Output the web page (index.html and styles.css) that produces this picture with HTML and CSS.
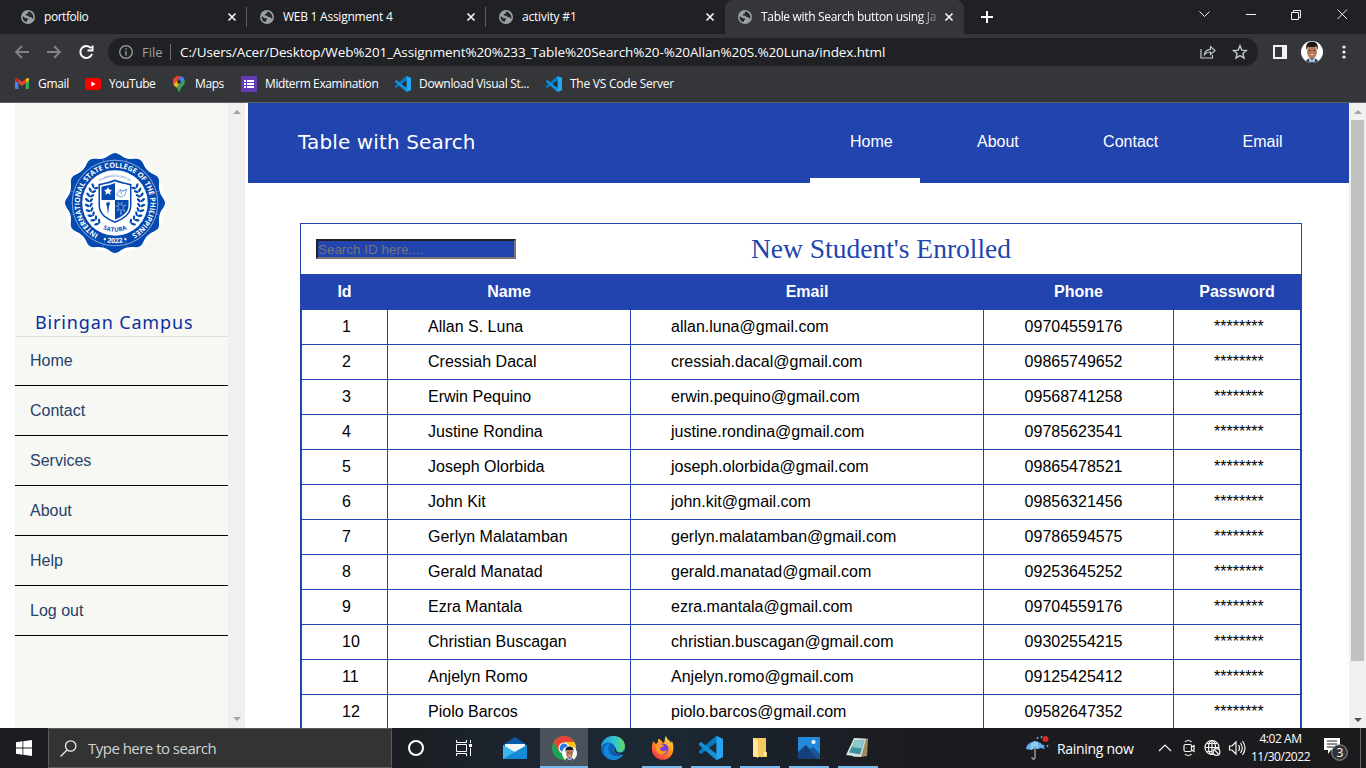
FILE: index.html
```html
<!DOCTYPE html>
<html lang="en">
<head>
<meta charset="utf-8">
<title>Table with Search button using JavaScript</title>
<link rel="stylesheet" href="styles.css">
</head>
<body>
<svg class="defs" width="0" height="0">
  <defs>
    <symbol id="globe" viewBox="0 0 14 14"><circle cx="7" cy="7" r="7" fill="#9aa0a6"/><path d="M1.700 6 4.500 8.200h2.300l.4 1.400-1.200.7v1.500C2.900 11.800 1.300 9.500 1.700 6ZM7 1.600l-.3 1.900-2 .8.3 1.300 2.200.2 1.400 1.500 2-.1.8 1.400h1c.5-3.400-1.600-6.500-5.400-7Z" fill="#27282c"/></symbol>
    <symbol id="close" viewBox="0 0 10 10"><path d="m1.500 1.500 7 7m0-7-7 7" stroke="#f1f3f4" stroke-width="1.700"/></symbol>
    <symbol id="code" viewBox="0 0 24 24"><path d="m17.500 0 6.500 3v18l-6.500 3L6.800 14.400 2.100 18 0 16.800V15l14-12.500L17.500 0Z" fill="#0879bf"/><path d="M0 7.200 2.100 6l15.400 11.800V24L0 9Z" fill="#1291d8"/><path d="M17.500 6.300 10 12l7.500 5.700Z" fill="#25292e"/><path d="m17.500 0 6.500 3v18l-6.500 3Z" fill="#24a5f2"/></symbol>
    <symbol id="face" viewBox="0 0 22 22"><circle cx="11" cy="11" r="11" fill="#fff"/><path d="M5 20c1-2 3-3 6-3s5 1 6 3c-3 2.600-9 2.600-12 0Z" fill="#27364e"/><path d="m8 16 3 3 3-3v5H8Z" fill="#9fc4e8"/><ellipse cx="11" cy="10.800" rx="5" ry="6.800" fill="#b87858"/><path d="M5.500 9C4 2 8 .8 11 .8S18 2 16.500 9l-1.300-3.500c-3 .8-5.500.5-8.300.2Z" fill="#17171a"/><path d="M7.800 9.500h2m2.400 0h2" stroke="#5a3526"/><path d="M9 13.300h4c-.8 1.300-3.200 1.300-4 0Z" fill="#f4e6df"/></symbol>
    <path id="petal" d="M0 0-12-44.600C-7-45.500-4-50 0-50S7-45.500 12-44.600Z"/>
    <g id="leaf"><ellipse cx="-28" cy="-1" rx="2.600" ry="1.200" transform="rotate(35 -28 -1)"/><ellipse cx="-24" cy="-1" rx="2.500" ry="1.150" transform="rotate(-48 -24 -1)"/></g>
    <g id="laurel"><use href="#leaf" transform="rotate(-51)"/><use href="#leaf" transform="rotate(-40)"/><use href="#leaf" transform="rotate(-29)"/><use href="#leaf" transform="rotate(-18)"/><use href="#leaf" transform="rotate(-7)"/><use href="#leaf" transform="rotate(4)"/><use href="#leaf" transform="rotate(15)"/><use href="#leaf" transform="rotate(26)"/><use href="#leaf" transform="rotate(36)"/></g>
  </defs>
</svg>
<div class="screen">
  <div class="tabs">
    <div class="tab"><svg class="globe"><use href="#globe"/></svg><span class="tab-name t1">portfolio</span><svg class="close"><use href="#close"/></svg></div>
    <div class="tab"><svg class="globe"><use href="#globe"/></svg><span class="tab-name t2">WEB 1 Assignment 4</span><svg class="close"><use href="#close"/></svg></div>
    <div class="tab last"><svg class="globe"><use href="#globe"/></svg><span class="tab-name t3">activity #1</span><svg class="close"><use href="#close"/></svg></div>
    <div class="tab active"><svg class="globe"><use href="#globe"/></svg><span class="tab-name t4">Table with Search button using Ja</span><svg class="close"><use href="#close"/></svg></div>
    <svg class="plus" viewBox="0 0 12 12"><path d="M6 0v12M0 6h12" stroke="#fff" stroke-width="2"/></svg>
    <svg class="window-buttons" viewBox="0 0 150 20" fill="none" stroke="#f2f2f2"><path d="m.5 7.500 5 5 5-5"/><path d="M47 10.500h10"/><path d="M92.500 8.500h7v7h-7zM94.500 8V6.500h7v7H100"/><path d="m138.500 5.500 9.500 9.500m0-9.500-9.500 9.500"/></svg>
  </div>
  <div class="toolbar">
    <svg class="nav" viewBox="0 0 84 16" fill="none" stroke-width="1.800"><path d="M15 8H2m6-6L2 8l6 6M33 8h13m-6-6 6 6-6 6" stroke="#828387"/><path d="M77 4.200A6 6 0 1 0 78 10M78.500 1.500v5h-5" stroke="#fff" stroke-width="2"/></svg>
    <div class="omnibox">
      <svg class="info" viewBox="0 0 14 14"><circle cx="7" cy="7" r="6.300" fill="none" stroke="#9aa0a6" stroke-width="1.300"/><path d="M7 6v4.500M7 3.300v1.400" stroke="#9aa0a6" stroke-width="1.400"/></svg>
      <span class="scheme">File</span><span class="bar"></span>
      <span class="url">C:/Users/Acer/Desktop/Web%201_Assignment%20%233_Table%20Search%20-%20Allan%20S.%20Luna/index.html</span>
      <svg class="share" viewBox="0 0 48 16" fill="none" stroke="#c4c7c9" stroke-width="1.200"><path d="M1 5v9h11.500v-3M4.500 10.500C5 7 7 5.500 10.500 5.300V2.500L15 6.500l-4.500 4V8C8 8 6 8.800 4.500 10.500Z"/><path d="m40 1.800 1.800 4.300 4.600.4-3.500 3 1.100 4.500-4-2.400-4 2.400 1.100-4.500-3.500-3 4.600-.4Z" stroke-width="1.400"/></svg>
    </div>
    <svg class="panel" viewBox="0 0 14 14"><path d="M0 0h14v14H0z" fill="#f1f3f4"/><path d="M2 2h7v10H2z" fill="#35363a"/></svg>
    <svg class="avatar"><use href="#face"/></svg>
    <svg class="dots" viewBox="0 0 4 14" fill="#f1f3f4"><circle cx="2" cy="2" r="1.600"/><circle cx="2" cy="7" r="1.600"/><circle cx="2" cy="12" r="1.600"/></svg>
  </div>
  <div class="bookmarks">
    <div class="bm gmail"><svg viewBox="0 0 14 11" width="14" height="11"><path d="M0 1.500V10a1 1 0 0 0 1 1h2.300V5Z" fill="#4285f4"/><path d="M14 1.500V10a1 1 0 0 1-1 1h-2.300V5Z" fill="#34a853"/><path d="M10.700 1.200V5L14 2.500V1.300C14-.1 12.500-.3 11.600.5Z" fill="#fbbc04"/><path d="M3.300 5V1L7 3.700 10.700 1v4L7 7.800Z" fill="#ea4335"/><path d="M0 1.300v1.200L3.300 5V1.200L2.400.5C1.500-.3 0-.1 0 1.300Z" fill="#c5221f"/></svg><span>Gmail</span></div>
    <div class="bm youtube"><svg viewBox="0 0 16 12" width="16" height="12"><rect width="16" height="12" rx="2.500" fill="red"/><path d="m6.300 3.500 4.300 2.500-4.300 2.500Z" fill="#fff"/></svg><span>YouTube</span></div>
    <div class="bm maps"><svg viewBox="0 0 12 16" width="12" height="16"><path d="M0 6a6 6 0 0 1 1.500-4L6 6 2 10.600C1 9 0 8 0 6Z" fill="#fbbc04"/><path d="M1.400 2A6 6 0 0 1 8 .3L4 5Z" fill="#ea4335"/><path d="M8 .3c2 .6 3 1.800 3.500 3.200L4 12c-1-.8-1.500-1.300-2.200-2.400Z" fill="#4285f4"/><path d="M11.500 3.500C13.200 9 7.800 9.500 6.800 15.300c-.2.900-1.400.9-1.600 0C5 14 4.500 12.500 3.800 11.800Z" fill="#34a853"/><path d="M0 6c0-2 .5-3 1.400-4L4 4 1 9C.3 8 0 7 0 6Z" fill="#ea4335"/><path d="m1 9 3-4 2 3-2.500 3.600Z" fill="#fbbc04"/><circle cx="6" cy="5.800" r="2.100" fill="#35363a"/></svg><span>Maps</span></div>
    <div class="bm forms"><svg viewBox="0 0 16 16" width="16" height="16"><rect width="16" height="16" rx="1" fill="#673ab7"/><path d="M3 4h2v2H3zm3 0h7v2H6zM3 7h2v2H3zm3 0h7v2H6zm-3 3h2v2H3zm3 0h7v2H6z" fill="#fff"/></svg><span>Midterm Examination</span></div>
    <div class="bm studio"><svg width="16" height="16"><use href="#code"/></svg><span>Download Visual St...</span></div>
    <div class="bm server"><svg width="16" height="16"><use href="#code"/></svg><span>The VS Code Server</span></div>
  </div>
  <div class="page">
    <aside class="sidebar">
      <div class="side-content">
        <svg class="seal" viewBox="-50 -50 100 100" fill="#0449b0">
          <circle r="50" fill="#fff"/>
          <use href="#petal"/><use href="#petal" transform="rotate(30)"/><use href="#petal" transform="rotate(60)"/><use href="#petal" transform="rotate(90)"/><use href="#petal" transform="rotate(120)"/><use href="#petal" transform="rotate(150)"/><use href="#petal" transform="rotate(180)"/><use href="#petal" transform="rotate(210)"/><use href="#petal" transform="rotate(240)"/><use href="#petal" transform="rotate(270)"/><use href="#petal" transform="rotate(300)"/><use href="#petal" transform="rotate(330)"/>
          <circle r="42.800" fill="none" stroke="#e5edfa" stroke-width=".6"/>
          <circle r="32.800" fill="#fff"/>
          <path id="ring" d="M-16.500 31.200A35.300 35.300 0 1 1 16 31.500" fill="none"/>
          <path id="year" d="M-17 36.500A40.200 40.200 0 0 0 17 36.500" fill="none"/>
          <path id="small" d="M-17-20A26.300 26.300 0 0 1 17-20" fill="none"/>
          <path id="satura" d="M-13 25.600A28.700 28.700 0 0 0 13 25.600" fill="none"/>
          <text class="seal-text" textLength="187"><textPath href="#ring">INTERNATIONAL STATE COLLEGE OF THE PHILIPPINES</textPath></text>
          <text class="seal-text year"><textPath href="#year" startOffset="50%" text-anchor="middle">• 2022 •</textPath></text>
          <text class="seal-small"><textPath href="#small" startOffset="50%" text-anchor="middle">PILIPINOS SULONG SA</textPath></text>
          <text class="seal-satura"><textPath href="#satura" startOffset="50%" text-anchor="middle">SATURA</textPath></text>
          <use href="#laurel"/><use href="#laurel" transform="scale(-1 1)"/>
          <path d="M-16.500-19C-10-20.500-5-21.500 0-23.500 5-21.500 10-20.500 16.500-19V3C16 12 9 16 0 20-9 16-16 12-16.500 3Z"/>
          <path d="M-15-17.600C-9-19-4-20 0-21.700 4-20 9-19 15-17.600V3C14.500 11 8 15 0 18.300-8 15-14.500 11-15 3Z" fill="#fff"/>
          <path d="M-13.500-16.200C-8-17.600-3-18.500 0-20V-3H-13.500ZM0-3H13.500V3C13 10 7 13.500 0 16.700Z"/>
          <path d="m-7-16 1.200 2.600 2.800.3-2 2 .6 2.800L-7-9.800l-2.600 1.500.6-2.800-2-2 2.800-.3Z" fill="#fff"/>
          <path d="M1.500-8 5-13.500l3 1.500 3.500-2L10-8 6-6Zm4-5.500 1 5m4-4.500-3 1.500" fill="#fff" stroke="#487dc7" stroke-width=".7"/>
          <path d="m-9 1 1-2 1 1 1-2 1 3-1 2-1 9-1-9Z"/><path d="m3-1 2 3 2-3v4l4-1-3 2 2 5-3-3-1 6-1-6-3 2 2-4-3-1 3-.5Z" fill="none" stroke="#7aa3d8" stroke-width=".8"/>
        </svg>
        <div class="campus"><span>Biringan Campus</span></div>
        <nav class="side-nav"><a>Home</a><a>Contact</a><a>Services</a><a>About</a><a>Help</a><a>Log out</a></nav>
      </div>
      <div class="scroll"><svg viewBox="0 0 8 4"><path d="M0 4 4 0l4 4Z" fill="#a3a3a3"/></svg><svg viewBox="0 0 8 4"><path d="m0 0 4 4 4-4Z" fill="#a3a3a3"/></svg></div>
    </aside>
    <main class="main">
      <header class="header"><div class="brand">Table with Search</div><nav class="menu"><a class="current">Home</a><a>About</a><a>Contact</a><a>Email</a></nav></header>
      <section class="students">
        <div class="caption"><input class="search" placeholder="Search ID here...."><h1>New Student's Enrolled</h1></div>
        <div class="grid">
          <div class="row head"><span>Id</span><span>Name</span><span>Email</span><span>Phone</span><span>Password</span></div>
          <div class="row"><span>1</span><span>Allan S. Luna</span><span>allan.luna@gmail.com</span><span>09704559176</span><span>********</span></div>
          <div class="row"><span>2</span><span>Cressiah Dacal</span><span>cressiah.dacal@gmail.com</span><span>09865749652</span><span>********</span></div>
          <div class="row"><span>3</span><span>Erwin Pequino</span><span>erwin.pequino@gmail.com</span><span>09568741258</span><span>********</span></div>
          <div class="row"><span>4</span><span>Justine Rondina</span><span>justine.rondina@gmail.com</span><span>09785623541</span><span>********</span></div>
          <div class="row"><span>5</span><span>Joseph Olorbida</span><span>joseph.olorbida@gmail.com</span><span>09865478521</span><span>********</span></div>
          <div class="row"><span>6</span><span>John Kit</span><span>john.kit@gmail.com</span><span>09856321456</span><span>********</span></div>
          <div class="row"><span>7</span><span>Gerlyn Malatamban</span><span>gerlyn.malatamban@gmail.com</span><span>09786594575</span><span>********</span></div>
          <div class="row"><span>8</span><span>Gerald Manatad</span><span>gerald.manatad@gmail.com</span><span>09253645252</span><span>********</span></div>
          <div class="row"><span>9</span><span>Ezra Mantala</span><span>ezra.mantala@gmail.com</span><span>09704559176</span><span>********</span></div>
          <div class="row"><span>10</span><span>Christian Buscagan</span><span>christian.buscagan@gmail.com</span><span>09302554215</span><span>********</span></div>
          <div class="row"><span>11</span><span>Anjelyn Romo</span><span>Anjelyn.romo@gmail.com</span><span>09125425412</span><span>********</span></div>
          <div class="row"><span>12</span><span>Piolo Barcos</span><span>piolo.barcos@gmail.com</span><span>09582647352</span><span>********</span></div>
        </div>
      </section>
    </main>
    <div class="scroll page-scroll"><svg viewBox="0 0 8 4"><path d="M0 4 4 0l4 4Z" fill="#a3a3a3"/></svg><div class="thumb"></div><svg viewBox="0 0 8 4"><path d="m0 0 4 4 4-4Z" fill="#505050"/></svg></div>
  </div>
  <footer class="taskbar">
    <div class="start"><svg width="16" height="16" viewBox="0 0 16 16" fill="#fff"><path d="m0 2.200 6.500-.9v6.200H0Zm7.300-1L16 0v7.500H7.300ZM0 8.400h6.500v6.300L0 13.800Zm7.300 0H16V16l-8.700-1.200Z"/></svg></div>
    <div class="find"><svg width="17" height="17" viewBox="0 0 17 17" fill="none" stroke="#eee" stroke-width="1.300"><circle cx="10.700" cy="6" r="5.200"/><path d="M7 10 .5 16.500"/></svg><span>Type here to search</span></div>
    <div class="app"><svg width="18" height="18" viewBox="0 0 18 18"><circle cx="9" cy="9" r="7" fill="none" stroke="#fff" stroke-width="2"/></svg></div>
    <div class="app"><svg width="16" height="16" viewBox="0 0 16 16" fill="none" stroke="#fff"><path d="M.5 0v2.500h10V0M.5 16v-2.500h10V16M.5 4.500h10v7H.5zM14.500 0v3m0 5v8"/><path d="M13 4h3v3h-3z" fill="#fff" stroke="none"/></svg></div>
    <div class="app first"><svg width="24" height="22" viewBox="0 0 24 22"><path d="m0 8 12-8 12 8v4H0Z" fill="#0a5ba9"/><path d="M2 7h20v9H2Z" fill="#f3f6f8"/><path d="m0 8 12 7 12-7v14H0Z" fill="#39b7ed"/><path d="m0 22 24-14v14Z" fill="#1688d8"/></svg></div>
    <div class="app open selected"><svg width="26" height="27" viewBox="0 0 26 27"><circle cx="13" cy="13" r="12" fill="#1ba356"/><path d="M2.600 7A12 12 0 0 1 23.400 7H13l-5 9Z" fill="#ea4335"/><path d="M23.400 7A12 12 0 0 1 13 25l5.200-9L13 7Z" fill="#fbc116"/><circle cx="13" cy="13" r="5.500" fill="#fff"/><circle cx="13" cy="13" r="4.400" fill="#2c7be5"/><use href="#face" x="11" y="11" width="15" height="15"/></svg></div>
    <div class="app"><svg width="24" height="24" viewBox="0 0 24 24"><defs><linearGradient id="sea" x2="1"><stop stop-color="#169de0"/><stop offset=".6" stop-color="#36c6cf"/><stop offset="1" stop-color="#68dc57"/></linearGradient></defs><circle cx="12" cy="12" r="12" fill="#0c65bc"/><path d="M0 11C1-3 23-4 24 10c0 6-6 8-10 6-2-1 1-2 0-5C12 5 4 5 0 11Z" fill="url(#sea)"/><path d="M11 7C5 8 6 20 15 20c4 0 6-1 8-3-4 9-15 9-19 2C1 13 5 6 11 7Z" fill="#1686d9"/><path d="M11.500 10c-4 4 0 10 8 8.500l3-1c-4 4-13 3-13-4 0-2 1-3.500 2-3.500Z" fill="#164b8c"/><path d="M14 16c-2-1 1-2 0-5 2 2 0 4 4 5.500q3 .8 6-1.500v3l-1 .5c-4 0-7-1-9-2.500Z" fill="#1d2a36"/></svg></div>
    <div class="app open"><svg width="23" height="24" viewBox="0 0 23 24"><defs><linearGradient id="fire" x1=".8" x2=".2" y2="1"><stop stop-color="#ffe33f"/><stop offset=".5" stop-color="#ff8b20"/><stop offset="1" stop-color="#f52b50"/></linearGradient></defs><path d="M1 10 2 5l3 3 2-2V3c2 0 4 2 5 4 3-1 1-5 3-7 1 4 4 4 5 7l1-2c2 5 2 11-1 15-6 7-17 4-19-5Z" fill="url(#fire)"/><circle cx="12" cy="13" r="5.500" fill="#763fd8"/><path d="M5 9c3 0 5-2 8 1l-4 2c0 4 5 4 7 2-1 6-10 6-11-1Z" fill="#ff9b24"/></svg></div>
    <div class="app open"><svg width="24" height="24"><use href="#code"/></svg></div>
    <div class="app open"><svg width="16" height="20" viewBox="0 0 16 20"><path d="M1 0h13v14h1v5H1Z" fill="#f5ca61"/><path d="m1 0 5 3v17l-5-3Z" fill="#ffe79c"/><path d="M12 14h2v4h-2z" fill="#faf0c8"/></svg></div>
    <div class="app open"><svg width="22" height="22" viewBox="0 0 22 22"><path d="M0 0h22v22H0z" fill="#2489dc"/><path d="M0 15 8 8l14 14H0Z" fill="#173f7c"/><path d="m11 13 4-3 7 7v5h-2Z" fill="#1b5599"/><circle cx="15.500" cy="5" r="2" fill="#fff"/></svg></div>
    <div class="app open"><svg width="24" height="22" viewBox="0 0 24 22"><path d="m8 1 14 .5L21 19l-6 1H7Z" fill="#a08a5c"/><path d="m8 1 12 1-5 18L0 18Z" fill="#d1e6e4"/><path d="m9 3 9.500.5-4.500 14L3 15.500Z" fill="#3f8f9e"/><path d="m9 3 9.500.5-3 8L6 10Z" fill="#8dc9cf"/></svg></div>
    <div class="tray">
      <svg class="umbrella" viewBox="0 0 24 24"><path d="M1 13C2 4 16 2 20 13l-4-1-3 1-3-1-4 2Z" fill="#5eafea"/><path d="M9 5C6 7 5 10 6 14l4-2 3 1V6Z" fill="#8ccaf5"/><path d="M10 10v12c-1 2-3 1-3-1" stroke="#8e9aa3" stroke-width="1.500" fill="none"/><path d="m12 3 1-2m3 1 1-2m2 9-1 2m5-2-1 2" stroke="#58aaea" stroke-width="1.500"/><circle cx="20.500" cy="3" r="3" fill="#d92a20"/></svg>
      <span class="weather">Raining now</span>
      <svg class="status" viewBox="0 0 90 20" fill="none" stroke="#f5f5f5" stroke-width="1.200"><path d="m1 13 6-6 6 6"/><rect x="26" y="6.500" width="7.500" height="7" rx="1.500"/><path d="m33.500 9 2.500-1.500v6L33.500 12M28.500 10h.5M27 4c1.500-2 5-2 6.500 0M27 16c1.500 2 5 2 6.500 0"/><circle cx="54" cy="9.500" r="7"/><ellipse cx="54" cy="9.500" rx="3.500" ry="7"/><path d="M47 9.500h14M48 5.500h12M48 13.500h6M54 2.500v14"/><circle cx="58.500" cy="14" r="3.400" fill="#1d1e22"/><path d="m56.500 12 4 4M71.500 8h2.500l4-4v12l-4-4h-2.500Zm9-1q2 3 0 6m2-8q3.500 5 0 10m2-12q5 7 0 14"/></svg>
      <div class="clock"><span>4:02 AM</span><span>11/30/2022</span></div>
      <svg class="notice" viewBox="0 0 26 26"><path d="M1 3h16v12H8l-3 4v-4H1Z" fill="#fff"/><path d="M4 6h10M4 9h10M4 12h8" stroke="#202125"/><circle cx="16.500" cy="17.500" r="7.800" fill="#333438" stroke="#98999c"/><text x="13.500" y="22" class="count">3</text></svg>
    </div>
  </footer>
</div>
</body>
</html>
```
FILE: styles.css
```css
* { box-sizing: border-box; }
body { margin: 0; overflow: hidden; background: #fff; font-family: "Liberation Sans", Arial, sans-serif; }
svg { display: block; flex: none; }
.defs { position: absolute; }
.screen { width: 1366px; height: 768px; display: flex; flex-direction: column; overflow: hidden; }
.tabs, .toolbar, .bookmarks, .taskbar { font-family: "Open Sans", "Noto Sans", sans-serif; color: #fff; white-space: nowrap; }

.tabs { height: 34px; flex: none; background: #202124; display: flex; padding-left: 8px; }
.tab { width: 239px; height: 34px; display: flex; align-items: center; padding: 0 10px 0 13px; font-size: 12px; background: linear-gradient(#5c5d60, #5c5d60) right 0 top 7px / 1px 20px no-repeat; }
.tab.last, .tab.active { background: none; }
.tab.active { background: #35363a; border-radius: 8px 8px 0 0; }
.tab.last { border-radius: 0 0 8px 0; }
.globe { width: 14px; height: 14px; }
.tab-name { width: 178px; margin-left: 9px; padding-bottom: 1px; letter-spacing: -.25px; }
.t1 { letter-spacing: -.45px; }
.t3 { letter-spacing: -.2px; }
.t4 { letter-spacing: -.32px; -webkit-mask-image: linear-gradient(90deg, #000 158px, transparent 182px); mask-image: linear-gradient(90deg, #000 158px, transparent 182px); }
.close { width: 10px; height: 10px; margin-left: 5px; }
.plus { width: 12px; height: 12px; margin: 11px 0 0 17px; }
.window-buttons { width: 150px; height: 20px; margin: 4px 0 0 206px; }

.toolbar { height: 36px; flex: none; background: #35363a; display: flex; align-items: center; }
.nav { width: 84px; height: 16px; margin-left: 14px; }
.omnibox { width: 1150px; height: 28px; margin-left: 10px; border-radius: 14px; background: #202124; display: flex; align-items: center; padding: 0 10px 0 11px; font-size: 14px; }
.info { width: 14px; height: 14px; }
.scheme { width: 28px; margin-left: 9px; color: #9aa0a6; letter-spacing: 0; font-size: 13px; }
.bar { width: 1px; height: 16px; background: #6c6e72; }
.url { margin-left: 9px; flex: 1; font-size: 13.500px; letter-spacing: -.115px; }
.share { width: 48px; height: 16px; }
.panel { width: 14px; height: 14px; margin-left: 15px; }
.avatar { width: 22px; height: 22px; margin-left: 14px; }
.dots { width: 4px; height: 14px; margin-left: 19px; }

.bookmarks { height: 33px; flex: none; background: #35363a; border-bottom: 1px solid #5f6063; display: flex; padding-left: 15px; }
.bm { height: 27px; display: flex; align-items: center; gap: 8px; font-size: 12px; letter-spacing: -.3px; }
.gmail { width: 70px; gap: 9px; }
.youtube { width: 88px; letter-spacing: -.42px; }
.maps { width: 68px; gap: 10px; letter-spacing: -.4px; }
.forms { width: 154px; letter-spacing: -.4px; }
.studio { width: 151px; }
.server { letter-spacing: -.25px; }

.page { height: 625px; flex: none; display: flex; overflow: hidden; }
.sidebar { width: 230px; margin: 0 3px 0 15px; display: flex; }
.side-content { width: 213px; background: #f7f8f4; padding-top: 50px; }
.seal { width: 100px; height: 100px; margin-left: 50px; }
.seal-text { font: bold 7.200px "Open Sans", sans-serif; fill: #fff; }
.seal-text.year { font-size: 7px; }
.seal-small { font: 3px "Open Sans", sans-serif; }
.seal-satura { font: bold 6px "Open Sans", sans-serif; letter-spacing: .2px; }
.campus { height: 84px; display: flex; align-items: flex-end; border-bottom: 1px solid #dcdddc; padding: 0 0 2px 20px; font-family: "Noto Sans", sans-serif; font-size: 18px; color: #0a2f9f; letter-spacing: .85px; white-space: nowrap; }
.side-nav a { height: 50px; display: flex; align-items: center; padding: 0 0 0 15px; font-size: 16px; color: #26416a; border-bottom: 1px solid #000; }
.side-nav a:first-child { height: 49px; }
.scroll { width: 17px; background: #f0f0f0; display: flex; flex-direction: column; align-items: center; justify-content: space-between; padding: 7px 0; }
.scroll svg { width: 8px; height: 4px; }

.main { width: 1101px; flex: none; }
.header { height: 80px; background: #2144ae; color: #fff; display: flex; }
.brand { width: 562px; flex: none; padding-left: 50px; line-height: 79px; font-family: "DejaVu Sans", Verdana, sans-serif; font-size: 20px; letter-spacing: .12px; white-space: nowrap; }
.menu { display: flex; gap: 17.300px; }
.menu a { padding: 0 27px 0 40px; height: 80px; line-height: 78px; font-size: 16px; }
.menu .current { border-bottom: 5px solid #fff; }
.students { width: 1002px; margin: 40px 0 0 52px; }
.caption { height: 51px; border: solid #2144ae; border-width: 1px 1px 0; display: flex; padding: 15px 0 0 15px; }
.search { width: 200px; height: 20px; padding: 0; margin: 0; border: 2px solid; border-color: #212121 #767676 #767676 #212121; border-radius: 0; background: #2144ae; font: 13.333px "Liberation Sans", Arial, sans-serif; letter-spacing: .05px; }
.search::placeholder { color: #757575; }
h1 { margin: -8px 0 0 235px; font: 27.500px/36px "Liberation Serif", Georgia, serif; color: #2144ae; white-space: nowrap; }
.grid { border: solid #2144ae; border-width: 0 2px; }
.row { height: 35px; display: grid; grid-template-columns: 86px 243px 353px 190px 126px; border-bottom: 1px solid #2144ae; font-size: 16px; line-height: 33px; }
.row span { padding-left: 40px; border-right: 1px solid #2144ae; white-space: nowrap; }
.row span:nth-child(4) { padding-left: 40.600px; }
.row span:last-child { border-right: 0; }
.row.head { height: 36px; background: #2144ae; color: #fff; font-weight: bold; text-align: center; line-height: 35px; }
.row.head span { padding-left: 0; }
.page-scroll { padding-bottom: 6px; }
.thumb { width: 13px; height: 541px; margin: 6px 0 auto; background: #c1c1c1; }

.taskbar { height: 40px; flex: none; display: flex; background: linear-gradient(90deg, #1c1d20 0, #1b1e22 400px, #1b252f 520px, #1c2935 660px, #1b222b 760px, #1c1c20 900px, #1b1b1e); }
.start { width: 48px; display: flex; align-items: center; justify-content: center; }
.find { width: 344px; border: 1px solid #5b5b5b; background: #333; display: flex; align-items: center; padding-left: 11px; gap: 11px; font-size: 15px; color: #d2d2d2; letter-spacing: -.52px; }
.app { width: 48px; height: 40px; display: flex; align-items: center; justify-content: center; flex: none; }
.app.first { margin-left: 3px; }
.first ~ .app { margin-left: 1px; }
.open { background: linear-gradient(#76b9ed, #76b9ed) center bottom / 40px 2px no-repeat; }
.selected { background: linear-gradient(#76b9ed, #76b9ed) center bottom / 48px 2px no-repeat, #4a535c; }
.tray { display: flex; align-items: center; margin-left: 143px; }
.umbrella { width: 24px; height: 24px; }
.weather { width: 101px; margin-left: 8px; font-size: 14px; letter-spacing: -.3px; }
.status { width: 90px; height: 20px; }
.clock { width: 66px; display: flex; flex-direction: column; align-items: center; margin-left: -.5px; font-size: 12px; line-height: 18px; letter-spacing: -.45px; }
.notice { width: 26px; height: 26px; margin-left: 9.500px; padding: 0; }
.count { font: 12px "Open Sans", sans-serif; fill: #fff; }
.tray::after { content: ""; width: 1px; height: 40px; margin-left: 11px; background: #66676a; }
```
